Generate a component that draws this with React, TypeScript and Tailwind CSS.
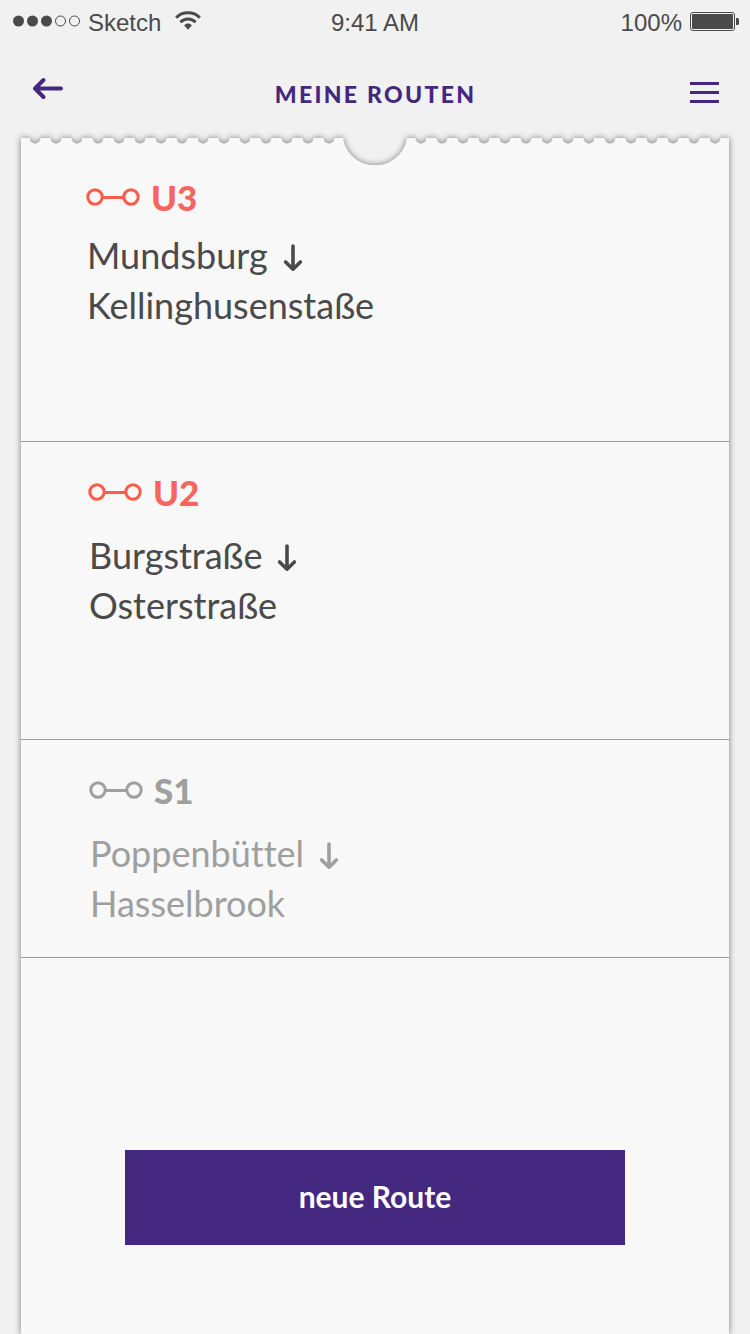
type Route = {
  line: string;
  from: string;
  to: string;
  muted?: boolean;
  className: string;
  gap: string;
};

const routes: Route[] = [
  { line: "U3", from: "Mundsburg", to: "Kellinghusenstaße", className: "pl-[66px] pt-3 pb-[111px]", gap: "mt-[13px]" },
  { line: "U2", from: "Burgstraße", to: "Osterstraße", className: "pl-[68px] pt-[30px] pb-[109px]", gap: "mt-[18px]" },
  { line: "S1", from: "Poppenbüttel", to: "Hasselbrook", muted: true, className: "pl-[69px] pt-[30px] pb-[29px]", gap: "mt-[18px]" },
];

function StatusBar() {
  return (
    <div className="grid h-[46px] grid-cols-3 items-center px-[11px] font-['Liberation_Sans',Arial,sans-serif] text-2xl text-[#4a4a4a]">
      <div className="flex items-center gap-2 pl-[2px]">
        <svg width="67" height="12" viewBox="0 0 67 12" className="mb-1" aria-hidden="true">
          <g fill="#4a4a4a">
            <circle cx="5.5" cy="6" r="5.5" />
            <circle cx="19.5" cy="6" r="5.5" />
            <circle cx="33.5" cy="6" r="5.5" />
          </g>
          <g fill="none" stroke="#4a4a4a" strokeWidth="1">
            <circle cx="47.5" cy="6" r="5" />
            <circle cx="61.5" cy="6" r="5" />
          </g>
        </svg>
        <span>Sketch</span>
        <svg width="26" height="19" viewBox="0 0 26 19" className="mb-[6px] ml-[6px]" aria-hidden="true">
          <g fill="none" stroke="#4a4a4a" strokeWidth="3">
            <path d="M1.2 6.8C7.6 0.2 18.4 0.2 24.8 6.8" />
            <path d="M5.4 11.2C9.6 7 16.4 7 20.6 11.2" />
          </g>
          <path d="M9.2 14.4C11.2 11.9 14.8 11.9 16.8 14.4L13 18.8Z" fill="#4a4a4a" />
        </svg>
      </div>
      <span className="text-center">9:41 AM</span>
      <div className="flex items-center justify-end gap-2">
        <span>100%</span>
        <svg width="49" height="19" viewBox="0 0 49 19" className="mb-1" aria-hidden="true">
          <rect x="0.5" y="0.5" width="44" height="18" rx="2.5" fill="none" stroke="#4a4a4a" />
          <rect x="2" y="2" width="41" height="15" rx="1" fill="#4a4a4a" />
          <path d="M46 6h1.5a1.5 1.5 0 0 1 1.5 1.5v4a1.5 1.5 0 0 1-1.5 1.5H46z" fill="#4a4a4a" />
        </svg>
      </div>
    </div>
  );
}

function NavBar() {
  return (
    <header className="grid h-[92px] grid-cols-[1fr_auto_1fr] items-center pl-8 pr-[31px] text-[#44277f]">
      <button type="button" aria-label="Zurück" className="h-8 w-8">
        <svg width="32" height="32" viewBox="0 0 32 32" fill="none" stroke="currentColor" strokeWidth="4" strokeLinecap="round" strokeLinejoin="round">
          <path d="M29 12.5H3.5M11.5 4L3 12.5L11.5 21" />
        </svg>
      </button>
      <h1 className="pt-1 text-[23px] font-black tracking-widest">MEINE ROUTEN</h1>
      <button type="button" aria-label="Menü" className="h-8 w-[29px] justify-self-end">
        <svg width="29" height="32" viewBox="0 0 29 32" fill="currentColor">
          <rect y="6" width="29" height="3" />
          <rect y="15" width="29" height="3" />
          <rect y="24" width="29" height="3" />
        </svg>
      </button>
    </header>
  );
}

function TicketEdge() {
  return (
    <div className="flex h-[27px]" aria-hidden="true">
      <div className="flex-1 bg-[#f8f8f8] [mask-image:radial-gradient(circle_6px_at_14px_0px,transparent_80%,black)] [mask-size:21px_27px] [mask-repeat:repeat-x]" />
      <div className="w-16 bg-[#f8f8f8] [mask-image:radial-gradient(circle_33px_at_32px_-5px,transparent_96%,black)]" />
      <div className="flex-1 bg-[#f8f8f8] [mask-image:radial-gradient(circle_6px_at_7px_0px,transparent_80%,black)] [mask-position:right_top] [mask-size:21px_27px] [mask-repeat:repeat-x]" />
    </div>
  );
}

function LineIcon({ color }: { color: string }) {
  return (
    <svg width="54" height="18" viewBox="0 0 54 18" fill="none" stroke={color} strokeWidth="3" className="overflow-visible" aria-hidden="true">
      <circle cx="8" cy="9" r="7.2" />
      <circle cx="44" cy="9" r="7.2" />
      <path d="M15 9.5H37" />
    </svg>
  );
}

function DownArrow() {
  return (
    <svg width="20" height="34" viewBox="0 0 20 34" fill="none" stroke="currentColor" strokeWidth="3.6" strokeLinecap="round" strokeLinejoin="round" aria-hidden="true">
      <path d="M10 8V31M2.6 24L10 31.2L17.4 24" />
    </svg>
  );
}

function RouteItem({ route }: { route: Route }) {
  return (
    <li className={`border-b border-[#9b9b9b] pr-6 ${route.className}`}>
      <h2 className={`flex h-10 items-center gap-[10px] text-[35px] font-black ${route.muted ? "text-[#9f9f9f]" : "text-[#f6665f]"}`}>
        <LineIcon color={route.muted ? "#9f9f9f" : "#f95d4a"} />
        {route.line}
      </h2>
      <p className={`text-[36px] leading-[50px] [font-variant-ligatures:none] ${route.gap} ${route.muted ? "text-[#9f9f9f]" : "text-[#4a4a4a]"}`}>
        <span className="flex items-center gap-[15px]">
          {route.from}
          <DownArrow />
        </span>
        <span className="block">{route.to}</span>
      </p>
    </li>
  );
}

export default function App() {
  return (
    <div className="flex min-h-screen flex-col overflow-hidden bg-[#f1f1f1] font-[Lato,sans-serif]">
      <StatusBar />
      <NavBar />
      <main className="mx-[21px] flex flex-1 flex-col drop-shadow-[0_0_3px_rgba(0,0,0,0.5)]">
        <TicketEdge />
        <div className="flex flex-1 flex-col bg-[#f8f8f8]">
          <ul>
            {routes.map((route) => (
              <RouteItem key={route.line} route={route} />
            ))}
          </ul>
          <div className="flex justify-center px-6 pt-48 pb-[89px]">
            <button type="button" className="h-[95px] w-full max-w-[500px] bg-[#44277f] pb-1 text-3xl font-bold text-white">
              neue Route
            </button>
          </div>
        </div>
      </main>
    </div>
  );
}
